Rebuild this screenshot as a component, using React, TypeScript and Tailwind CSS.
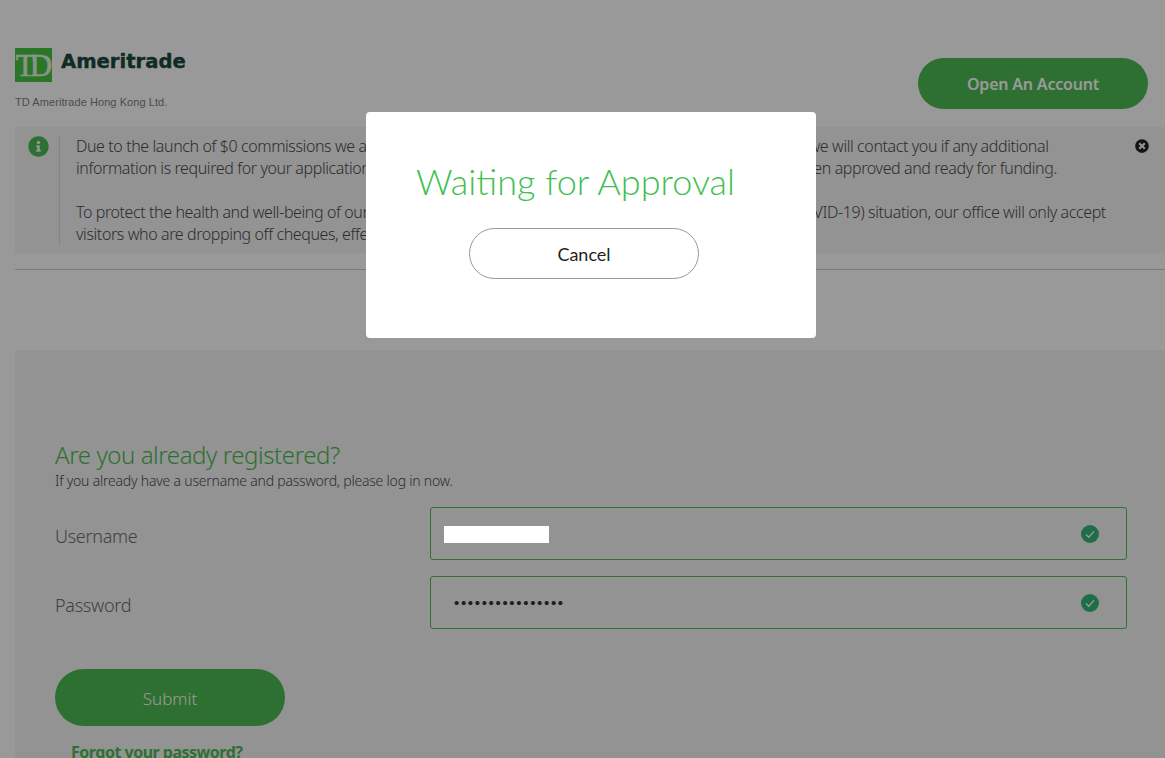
import { FaInfoCircle, FaTimesCircle } from 'react-icons/fa';

function CheckBadge() {
  return (
    <svg width="18" height="18" viewBox="0 0 18 18" className="shrink-0">
      <circle cx="9" cy="9" r="9" fill="#35ba75" />
      <path d="M5 9.5l2.8 2.8L13 6.4" fill="none" stroke="#ffffff" strokeWidth="1.3" />
    </svg>
  );
}

function Field({ label, value }: { label: string; value: string }) {
  return (
    <div className="flex items-center h-[53px]">
      <label className="w-[375px] pt-[6px] text-[18px] font-light tracking-[-0.3px] text-[#6e6e6e]">{label}</label>
      <div className="w-[697px] h-[53px] border border-[#4fbf54] rounded-[3px] flex items-center justify-between pl-[23px] pr-[27px]">
        <span className="pt-[2px] text-[15px] text-[#333333] tracking-[1.67px] font-['Liberation_Sans',sans-serif]">{value}</span>
        <CheckBadge />
      </div>
    </div>
  );
}

export default function App() {
  return (
    <div className="relative h-[758px] overflow-hidden bg-white font-['Noto_Sans',sans-serif]">
      <header className="h-[127px] pl-[15px] pr-[17px] pt-[48px] flex justify-between">
        <div>
          <div className="flex items-center gap-[9px]">
            <div className="w-[37px] h-[34px] bg-[#45c640] flex items-center justify-center">
              <span className="text-[#e8f6e4] text-[31px] leading-none tracking-[-5px] pr-[4px] [-webkit-text-stroke:0.6px_#e8f6e4] font-['Liberation_Serif',serif]">TD</span>
            </div>
            <span className="text-[#1a4a3a] text-[19.6px] font-bold leading-none mb-[6px] [-webkit-text-stroke:0.4px_#1a4a3a] font-['DejaVu_Sans',sans-serif]">Ameritrade</span>
          </div>
          <p className="mt-[13px] text-[11px] leading-[14px] tracking-[0.07px] text-[#808080] font-['Liberation_Sans',sans-serif]">TD Ameritrade Hong Kong Ltd.</p>
        </div>
        <button className="mt-[10px] w-[230px] h-[51px] rounded-full bg-[#4dbb52] text-white text-[16px] font-semibold tracking-[-0.2px]">Open An Account</button>
      </header>

      <section className="ml-[15px] h-[126px] bg-[#f5f5f5] flex pt-[8px]">
        <div className="w-[45px] h-[110px] border-r border-[#dddddd] pl-[13px] pt-[1px]">
          <FaInfoCircle className="text-[#4dbb52] text-[21px]" />
        </div>
        <div className="ml-[16px] flex-1 text-[16px] leading-[22px] font-light tracking-[-0.4px] text-[#4d4d4d] whitespace-nowrap">
          <p>Due to the launch of $0 commissions we are experiencing a very high volume of new account applications, we will contact you if any additional</p>
          <p>information is required for your application and we will let you know by email once your new account has been approved and ready for funding.</p>
          <p className="mt-[22px]">To protect the health and well-being of our clients and our staff during the ongoing coronavirus disease (COVID-19) situation, our office will only accept</p>
          <p>visitors who are dropping off cheques, effective immediately until further notice.</p>
        </div>
        <FaTimesCircle className="text-[#222222] text-[14px] mt-[4px] mr-[16px] shrink-0" />
      </section>

      <hr className="ml-[15px] mt-[16px] border-t border-[#cccccc]" />

      <section className="ml-[15px] mt-[80px] h-[408px] bg-[#f5f5f5] pl-[40px] pt-[91px]">
        <h2 className="text-[24px] leading-[28px] font-light tracking-[-0.42px] text-[#4dbb52]">Are you already registered?</h2>
        <p className="mt-[3px] text-[14px] leading-[18px] font-light tracking-[-0.21px] text-[#4d4d4d]">If you already have a username and password, please log in now.</p>
        <div className="mt-[17px] flex flex-col gap-[16px]">
          <Field label="Username" value="p" />
          <Field label="Password" value="••••••••••••••••" />
        </div>
        <button className="mt-[40px] block w-[230px] h-[57px] pt-[2px] rounded-full bg-[#4dbb52] text-white text-[17px] font-light">Submit</button>
        <a className="mt-[18px] ml-[16px] block text-[16px] leading-[16px] font-bold tracking-[-0.5px] text-[#4dbb52]">Forgot your password?</a>
      </section>

      <div className="absolute inset-0 bg-black/40" />
      <div className="absolute left-[444px] top-[526px] w-[105px] h-[17px] bg-white" />

      <div className="absolute left-[366px] top-[112px] w-[450px] h-[226px] bg-white rounded-[4px] pl-[50px] pt-[46px] font-['Lato',sans-serif]">
        <h1 className="text-[36px] leading-[46px] font-light text-[#42bf52]">Waiting for Approval</h1>
        <button className="mt-[24px] ml-[53px] block w-[230px] h-[51px] pt-[2px] rounded-full border border-[#999999] bg-white text-[#1f1f1f] text-[18px]">Cancel</button>
      </div>
    </div>
  );
}
